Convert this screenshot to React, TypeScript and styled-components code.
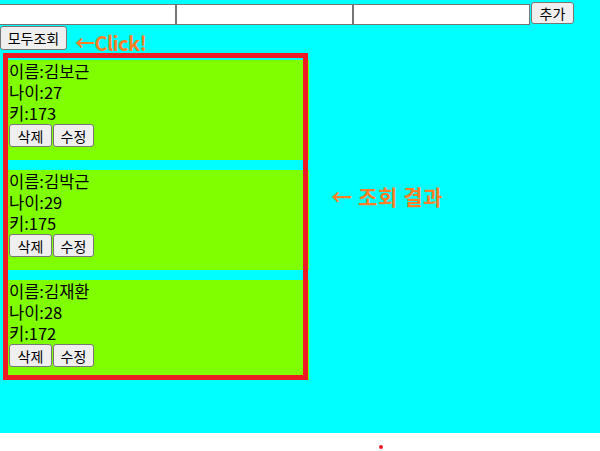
import React from 'react';
import styled, {createGlobalStyle} from "styled-components";

interface IPerson {
    id: number,
    name: string,
    age: number,
    height: number
}

const people: IPerson[] = [
    {id: 1, name: '김보근', age: 27, height: 173},
    {id: 2, name: '김박근', age: 29, height: 175},
    {id: 3, name: '김재환', age: 28, height: 172},
]

const GlobalStyle = createGlobalStyle`
  html, body {
    margin: 0;
    padding: 0;
    background: #fff;
    font-family: "Noto Sans CJK KR", "Noto Sans", sans-serif;
  }
`
const Page = styled.div`
  position: relative;
  width: 600px;
  height: 451px;
  overflow: hidden;
`
const Screen = styled.div`
  position: relative;
  height: 433px;
  background: #00ffff;
  padding-top: 2px;
  box-sizing: border-box;
`
const AddRow = styled.div`
  display: flex;
  align-items: flex-start;
  margin-left: -1px;
`
const TextInput = styled.input`
  width: 177px;
  height: 21px;
  margin: 2px 0 0;
  padding: 0 2px;
  box-sizing: border-box;
  border: 1px solid #767676;
  background: #fff;
  font: 13px "Noto Sans CJK KR", sans-serif;
`
const Button = styled.button<{ $w: number, $h: number }>`
  width: ${props => props.$w}px;
  height: ${props => props.$h}px;
  padding: 0;
  margin: 0;
  border: 1px solid #767676;
  border-radius: 3px;
  background: #efefef;
  color: #000;
  font-family: "Noto Sans CJK KR", sans-serif;
  font-size: 14px;
  line-height: 1;
  cursor: pointer;
`
const AddButton = styled(Button)`
  margin-left: 1px;
`
const ListRow = styled.div`
  display: flex;
  align-items: flex-end;
  gap: 8px;
  margin-top: 1px;
`
const Hint = styled.span`
  color: #ff7f27;
  font-weight: 700;
  font-size: 20px;
  line-height: 20px;
  letter-spacing: -0.6px;
  margin-bottom: -3px;
`
const Results = styled.div`
  width: 301px;
  margin: 10px 0 0 8px;
`
const Card = styled.div`
  height: 100px;
  margin-bottom: 10px;
  padding: 1px 1px 0;
  box-sizing: border-box;
  background: #80ff00;
  font-size: 16.5px;
  line-height: 21px;
  color: #000;
`
const Line = styled.div`
  height: 21px;
`
const Actions = styled.div`
  display: flex;
  gap: 1px;
`
const Frame = styled.div`
  position: absolute;
  left: 3px;
  top: 53px;
  width: 305px;
  height: 327px;
  border: 5px solid #ed1c24;
  box-sizing: border-box;
  pointer-events: none;
`
const Note = styled.div`
  position: absolute;
  left: 331px;
  top: 184px;
  color: #ff7f27;
  font-weight: 700;
  font-size: 21px;
  line-height: 24px;
  letter-spacing: 0.6px;
  white-space: nowrap;
`
const Dot = styled.div`
  position: absolute;
  left: 379px;
  top: 445px;
  width: 4px;
  height: 4px;
  border-radius: 50%;
  background: #ed1c24;
`

const App = () => {
    return (
        <Page>
            <GlobalStyle/>
            <Screen>
                <AddRow>
                    <TextInput/>
                    <TextInput/>
                    <TextInput/>
                    <AddButton $w={43} $h={22}>추가</AddButton>
                </AddRow>
                <ListRow>
                    <Button $w={67} $h={24}>모두조회</Button>
                    <Hint>←Click!</Hint>
                </ListRow>
                <Results>
                    {people.map(person => (
                        <Card key={person.id}>
                            <Line>이름:{person.name}</Line>
                            <Line>나이:{person.age}</Line>
                            <Line>키:{person.height}</Line>
                            <Actions>
                                <Button $w={43} $h={23}>삭제</Button>
                                <Button $w={41} $h={23}>수정</Button>
                            </Actions>
                        </Card>
                    ))}
                </Results>
                <Frame/>
                <Note>← 조회 결과</Note>
            </Screen>
            <Dot/>
        </Page>
    );
};

export default App;
